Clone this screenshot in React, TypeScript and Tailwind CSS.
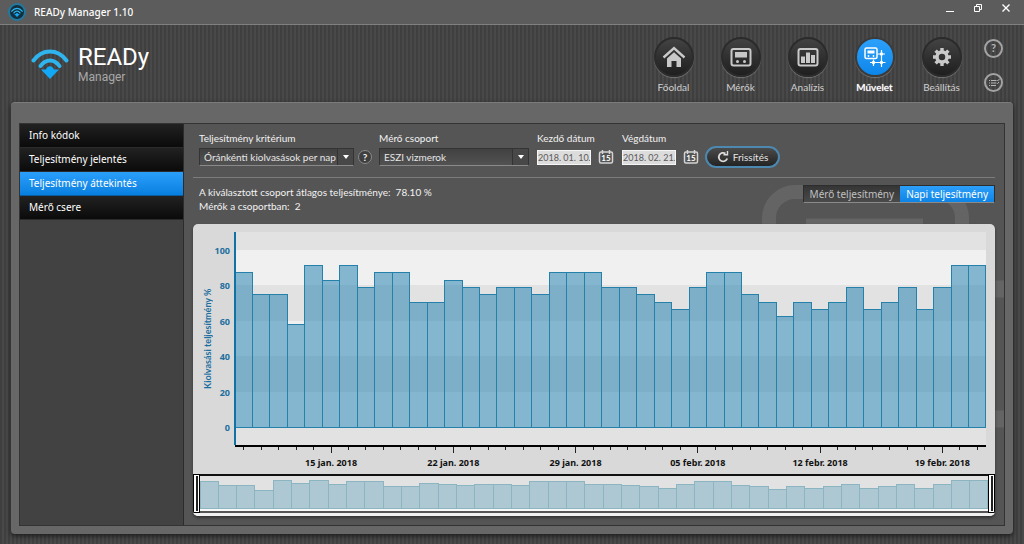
import { useState, type ReactNode } from "react";

const navItems = [
  { label: "Főoldal", icon: <HomeIcon /> },
  { label: "Mérők", icon: <MeterIcon /> },
  { label: "Analízis", icon: <AnalysisIcon /> },
  { label: "Művelet", icon: <OperationIcon /> },
  { label: "Beállítás", icon: <GearIcon /> },
];

const menuItems = [
  "Info kódok",
  "Teljesítmény jelentés",
  "Teljesítmény áttekintés",
  "Mérő csere",
];

// daily reading performance in %, one value per day
const values = [
  87.5, 75, 75, 58.3, 91.7, 83.3, 91.7, 79.2, 87.5, 87.5, 70.8, 70.8, 83.3,
  79.2, 75, 79.2, 79.2, 75, 87.5, 87.5, 87.5, 79.2, 79.2, 75, 70.8, 66.7, 79.2,
  87.5, 87.5, 75, 70.8, 62.5, 70.8, 66.7, 70.8, 79.2, 66.7, 70.8, 79.2, 66.7,
  79.2, 91.7, 91.7,
];

const dateLabels: Record<number, string> = {
  5: "15 jan. 2018",
  12: "22 jan. 2018",
  19: "29 jan. 2018",
  26: "05 febr. 2018",
  33: "12 febr. 2018",
  40: "19 febr. 2018",
};

const ZERO_Y = 195;
const UNIT = 1.77;

function pct(index: number) {
  return `${(index / values.length) * 100}%`;
}

function yPos(value: number) {
  return Math.round(ZERO_Y - value * UNIT);
}

function WifiMark({ className }: { className?: string }) {
  return (
    <svg viewBox="0 0 38 32" className={className} fill="none">
      <path
        d="M2.5 13.5C11.5 1.5 26.5 1.5 35.5 13.5"
        stroke="#2fb4ee"
        strokeWidth="4"
        strokeLinecap="round"
      />
      <path
        d="M9.5 19C14.5 11.500 23.500 11.500 28.500 19"
        stroke="#2fb4ee"
        strokeWidth="4"
        strokeLinecap="round"
      />
      <path d="M10 22.500h5c1.500-4.500 6.500-4.500 8 0h5L19 32z" fill="#12a8f5" />
    </svg>
  );
}

function HomeIcon() {
  return (
    <svg viewBox="0 0 24 24" className="h-6 w-6" fill="none">
      <path d="M1.500 12.500 12 3l10.500 9.500" stroke="#c9c9c9" strokeWidth="2.400" />
      <path d="M5 13.500 12 7.200l7 6.300V22h-4.500v-6h-5v6H5z" fill="#c9c9c9" />
    </svg>
  );
}

function MeterIcon() {
  return (
    <svg viewBox="0 0 24 24" className="h-6 w-6" fill="none">
      <rect x="2.500" y="4" width="19" height="16.500" rx="2" stroke="#c9c9c9" strokeWidth="2" />
      <rect x="6" y="7" width="12" height="5.500" fill="#c9c9c9" />
      <circle cx="8.500" cy="16.500" r="1.500" fill="#c9c9c9" />
      <circle cx="15.500" cy="16.500" r="1.500" fill="#c9c9c9" />
    </svg>
  );
}

function AnalysisIcon() {
  return (
    <svg viewBox="0 0 24 24" className="h-6 w-6" fill="none">
      <rect x="2.500" y="4" width="19" height="16.500" rx="2" stroke="#c9c9c9" strokeWidth="2" />
      <path d="M5 11.500h4V18H5zM10 7.500h4V18h-4zM15 10h4v8h-4z" fill="#c9c9c9" />
    </svg>
  );
}

function OperationIcon() {
  return (
    <svg viewBox="0 0 24 24" className="h-6 w-6" fill="none" stroke="#fff">
      <rect x="2" y="3" width="12" height="10.500" rx="1.500" strokeWidth="1.500" />
      <rect x="4.500" y="5.500" width="7" height="3" fill="#fff" stroke="none" />
      <circle cx="5.500" cy="11" r="0.900" fill="#fff" stroke="none" />
      <circle cx="10.500" cy="11" r="0.900" fill="#fff" stroke="none" />
      <path d="M18.500 5v17M7 17.500h15.500M10.500 14.500v6.500M15 9h7" strokeWidth="1.200" />
      <circle cx="18.500" cy="9" r="1.700" fill="#fff" stroke="none" />
      <circle cx="18.500" cy="17.500" r="1.700" fill="#fff" stroke="none" />
      <circle cx="10.500" cy="17.500" r="1.700" fill="#fff" stroke="none" />
    </svg>
  );
}

function GearIcon() {
  return (
    <svg viewBox="0 0 24 24" className="h-6 w-6" fill="none" stroke="#c9c9c9">
      <circle cx="12" cy="12" r="5" strokeWidth="3.500" />
      <path
        d="M12 3v4M12 17v4M3 12h4M17 12h4M5.600 5.600l2.900 2.900M15.500 15.500l2.900 2.900M5.600 18.400l2.900-2.900M15.500 8.500l2.900-2.900"
        strokeWidth="3.400"
      />
    </svg>
  );
}

function CalendarIcon() {
  return (
    <svg viewBox="0 0 16 16" className="h-4 w-4" fill="none">
      <rect x="1.500" y="3" width="13" height="11" rx="1.500" stroke="#d4d4d4" strokeWidth="1.500" />
      <path d="M4.500 1v4M11.500 1v4" stroke="#d4d4d4" strokeWidth="1.500" />
      <text
        x="8"
        y="12"
        textAnchor="middle"
        fontSize="8"
        fontWeight="700"
        fill="#fff"
      >
        15
      </text>
    </svg>
  );
}

function TitleBar() {
  return (
    <div className="flex h-[25px] items-center justify-between border-b border-[#808080] bg-[#5c5c5c] pr-[14px] pl-2">
      <div className="flex items-center gap-2">
        <span className="flex h-[18px] w-[18px] items-center justify-center rounded-full border-2 border-[#2279a0] bg-[#12303f]">
          <WifiMark className="h-3 w-3" />
        </span>
        <span className="font-['Noto_Sans',sans-serif] text-[10px] font-medium text-white">
          READy Manager 1.10
        </span>
      </div>
      <div className="flex items-center gap-5 pb-2 text-white">
        <button aria-label="Minimize">
          <svg className="h-2 w-2" viewBox="0 0 8 8">
            <path d="M0 7.500h8" stroke="currentColor" />
          </svg>
        </button>
        <button aria-label="Restore">
          <svg className="h-2 w-2" viewBox="0 0 8 8" fill="none" stroke="currentColor">
            <path d="M.5 2.500h5v5h-5zM2.500 2.500v-2h5v5h-2" />
          </svg>
        </button>
        <button aria-label="Close">
          <svg className="h-2 w-2" viewBox="0 0 8 8" stroke="currentColor" strokeWidth="1.400">
            <path d="M.5.5l7 7M7.500.5l-7 7" />
          </svg>
        </button>
      </div>
    </div>
  );
}

function NavButton({
  label,
  icon,
  active,
  onClick,
}: {
  label: string;
  icon: ReactNode;
  active: boolean;
  onClick: () => void;
}) {
  return (
    <button onClick={onClick} className="flex w-[67px] flex-col items-center gap-[2px]">
      <span
        className={
          active
            ? "flex h-10 w-10 items-center justify-center rounded-full border-2 border-[#3b3b3b] bg-linear-to-b from-[#2ba1fb] to-[#0c86ea] shadow-[0_1px_1px_#777]"
            : "flex h-10 w-10 items-center justify-center rounded-full border-2 border-[#2b2b2b] bg-linear-to-b from-[#434343] to-[#1f1f1f] shadow-[0_1px_1px_#777]"
        }
      >
        {icon}
      </span>
      <span
        className={
          active
            ? "text-[10px] leading-4 text-white [text-shadow:0_0_1px_#fff]"
            : "text-[10px] leading-4 text-[#d0d0d0]"
        }
      >
        {label}
      </span>
    </button>
  );
}

function Header() {
  const [active, setActive] = useState("Művelet");
  return (
    <header className="flex h-[77px] items-start justify-between pr-[21px] pl-[31px]">
      <div className="flex gap-[9px] pt-[18px]">
        <WifiMark className="mt-1 h-8 w-[38px]" />
        <div className="font-['Roboto',sans-serif]">
          <div className="text-[24px] leading-7 text-white">READy</div>
          <div className="text-[12px] leading-3 text-[#a8a8a8]">Manager</div>
        </div>
      </div>
      <div className="flex gap-[9px] pt-3">
        <nav className="flex">
          {navItems.map((item) => (
            <NavButton
              key={item.label}
              label={item.label}
              icon={item.icon}
              active={active === item.label}
              onClick={() => setActive(item.label)}
            />
          ))}
        </nav>
        <div className="flex flex-col gap-[15px] pt-[2px]">
          <button
            aria-label="Súgó"
            className="flex h-[19px] w-[19px] items-center justify-center rounded-full border-2 border-[#a3a3a3] text-[11px] font-bold text-[#b5b5b5]"
          >
            ?
          </button>
          <button
            aria-label="Napló"
            className="flex h-[19px] w-[19px] items-center justify-center rounded-full border-2 border-[#a3a3a3]"
          >
            <svg viewBox="0 0 12 12" className="h-3 w-3" stroke="#b5b5b5" fill="none">
              <path d="M1 3.500h1M3 3.500h5M1 6h1M3 6h5M1 8.500h1M3 8.500h5M8.500 3l1 1 2-2M8.500 6l1 .5 1.500-1.500" />
            </svg>
          </button>
        </div>
      </div>
    </header>
  );
}

function Sidebar() {
  const [active, setActive] = useState("Teljesítmény áttekintés");
  return (
    <aside className="w-[164px] shrink-0 border-r border-[#2c2c2c] bg-[#424242] font-['Noto_Sans',sans-serif] text-[10px] text-white">
      {menuItems.map((item) => (
        <button
          key={item}
          onClick={() => setActive(item)}
          className={
            active === item
              ? "block h-6 w-full border-b border-[#0b5c9c] bg-linear-to-b from-[#2a9ffa] to-[#067fe0] px-[9px] text-left"
              : "block h-6 w-full border-b border-[#2b2b2b] bg-linear-to-b from-[#222] to-[#0b0b0b] px-[9px] text-left"
          }
        >
          {item}
        </button>
      ))}
    </aside>
  );
}

function SelectField({
  id,
  label,
  option,
  className,
}: {
  id: string;
  label: string;
  option: string;
  className: string;
}) {
  return (
    <div className={className}>
      <label htmlFor={id} className="block leading-4">
        {label}
      </label>
      <div className="relative mt-[2px]">
        <select
          id={id}
          className="block h-[18px] w-full appearance-none border border-[#343434] border-b-[#8a8a8a] bg-linear-to-b from-[#414141] to-[#525252] pr-4 pl-1 text-[#e6e6e6]"
        >
          <option>{option}</option>
        </select>
        <span className="pointer-events-none absolute inset-y-px right-px flex w-4 items-center justify-center border-l border-[#333] bg-[#484848]">
          <svg viewBox="0 0 6 4" className="h-1 w-[6px]" fill="#fff">
            <path d="M0 0h6L3 4z" />
          </svg>
        </span>
      </div>
    </div>
  );
}

function DateField({ id, label, value }: { id: string; label: string; value: string }) {
  return (
    <div className="w-[77px]">
      <label htmlFor={id} className="block leading-4">
        {label}
      </label>
      <div className="mt-[2px] flex h-[18px] items-center gap-[7px]">
        <input
          id={id}
          defaultValue={value}
          className="h-[15px] w-[54px] min-w-0 border border-[#f5f5f5] bg-[#dcdcdc] text-[9px] text-[#5a5a5a]"
        />
        <button aria-label={`${label} választása`}>
          <CalendarIcon />
        </button>
      </div>
    </div>
  );
}

function FilterBar() {
  return (
    <div className="flex border-b border-[#7c7c7c] px-[6px] pt-[6px] pb-[11px] text-[10px] text-[#f2f2f2]">
      <SelectField
        id="criterion"
        label="Teljesítmény kritérium"
        option="Óránkénti kiolvasások per nap"
        className="w-[155px]"
      />
      <button
        aria-label="Kritérium súgó"
        className="mt-[20px] ml-1 flex h-[14px] w-[14px] items-center justify-center rounded-full border border-[#8a8a8a] bg-[#3f3f3f] text-[10px] font-bold"
      >
        ?
      </button>
      <SelectField
        id="group"
        label="Mérő csoport"
        option="ESZI vizmerok"
        className="ml-[7px] w-[150px]"
      />
      <div className="ml-2 flex gap-2">
        <DateField id="start" label="Kezdő dátum" value="2018. 01. 10." />
        <DateField id="end" label="Végdátum" value="2018. 02. 21." />
      </div>
      <button className="mt-4 -mb-1 ml-[6px] flex h-[22px] w-[75px] items-center justify-center gap-1 rounded-full border-2 border-[#4c88b0] bg-linear-to-b from-[#4b4b4b] to-[#242424] text-[#e6e6e6]">
        <svg viewBox="0 0 12 12" className="h-3 w-3" fill="none" stroke="#dcdcdc" strokeWidth="1.800">
          <path d="M8.500 2.500A4.300 4.300 0 1 0 10.200 7.500" />
          <path d="M6.500 3.700h4V0" strokeWidth="1.400" />
        </svg>
        Frissítés
      </button>
    </div>
  );
}

function Summary() {
  const [tab, setTab] = useState("daily");
  const on =
    "h-4 bg-linear-to-b from-[#2b9ff9] to-[#0c84e6] px-[6px] leading-4 text-white";
  const off =
    "h-4 bg-linear-to-b from-[#353535] to-[#4a4a4a] px-[6px] leading-4 text-[#c0c0c0]";
  return (
    <div className="flex h-[46px] items-start justify-between pt-[7px] pl-[6px] text-[10px]">
      <div className="leading-[14px] text-[#f2f2f2]">
        <p>A kiválasztott csoport átlagos teljesítménye:&nbsp; 78.10 %</p>
        <p>Mérők a csoportban:&nbsp; 2</p>
      </div>
      <div className="flex border border-[#2d2d2d] border-b-[#8a8a8a] font-['Noto_Sans',sans-serif]">
        <button className={tab === "meter" ? on : off} onClick={() => setTab("meter")}>
          Mérő teljesítmény
        </button>
        <button className={tab === "daily" ? on : off} onClick={() => setTab("daily")}>
          Napi teljesítmény
        </button>
      </div>
    </div>
  );
}

function Bars({ y, base, fill, stroke }: {
  y: (value: number) => number;
  base: number;
  fill: string;
  stroke: string;
}) {
  return (
    <g shapeRendering="crispEdges">
      {values.map((value, i) => (
        <rect
          key={i}
          x={pct(i)}
          y={y(value)}
          width={pct(1)}
          height={base - y(value)}
          fill={fill}
          stroke={stroke}
        />
      ))}
    </g>
  );
}

function MainChart() {
  return (
    <div className="flex pt-2 pr-[9px]">
      <div className="flex w-[21px] shrink-0 justify-end pb-[28px]">
        <span className="rotate-180 text-center text-[9px] leading-[12px] font-bold text-[#1d6fa0] [writing-mode:vertical-rl]">
          Kiolvasási teljesítmény %
        </span>
      </div>
      <svg className="h-[242px] w-[21px] shrink-0 font-['Noto_Sans',sans-serif]">
        {[100, 80, 60, 40, 20, 0].map((tick) => (
          <text
            key={tick}
            x="16"
            y={yPos(tick) + 4}
            textAnchor="end"
            className="fill-[#1d6fa0] text-[9px] font-bold"
          >
            {tick}
          </text>
        ))}
      </svg>
      <svg className="h-[242px] min-w-0 flex-1 overflow-visible font-['Noto_Sans',sans-serif]">
        <rect width="100%" height="213" fill="#e2e2e2" />
        {[100, 60, 20].map((top) => (
          <rect
            key={top}
            y={yPos(top)}
            width="100%"
            height={yPos(top - 20) - yPos(top)}
            fill="#f0f0f0"
          />
        ))}
        <Bars y={yPos} base={ZERO_Y} fill="rgb(32 128 176 / 0.52)" stroke="#2580aa" />
        <rect x="-1" width="2" height="213" fill="#1173a3" />
        <rect y="213" width="100%" height="2" fill="#000" />
        {values.map((_, i) => (
          <line
            key={i}
            x1={pct(i + 0.5)}
            x2={pct(i + 0.5)}
            y1="215"
            y2={dateLabels[i] ? 221 : 218}
            stroke="#222"
            shapeRendering="crispEdges"
          />
        ))}
        {Object.entries(dateLabels).map(([i, label]) => (
          <text
            key={i}
            x={pct(Number(i) + 0.5)}
            y="234"
            textAnchor="middle"
            className="fill-[#111] text-[9px] font-bold"
          >
            {label}
          </text>
        ))}
      </svg>
    </div>
  );
}

function RangeHandle() {
  return (
    <span className="flex h-full w-[7px] shrink-0 justify-center border border-black bg-white py-px">
      <span className="w-[2px] bg-[#222]" />
    </span>
  );
}

function Overview() {
  return (
    <div className="flex h-[39px]">
      <RangeHandle />
      <div className="min-w-0 flex-1 border-t-2 border-b-2 border-t-[#111] border-b-[#555] bg-[#f7f7f7]">
        <svg className="h-[33px] w-full bg-[#e2e2e2]">
          <Bars
            y={(value) => Math.round(32 - value * 0.305)}
            base={32}
            fill="#adc8d2"
            stroke="#8ab5c1"
          />
        </svg>
      </div>
      <RangeHandle />
    </div>
  );
}

function Watermark() {
  return (
    <svg className="absolute top-[60px] right-0 h-[300px] w-[242px]" fill="none" stroke="#646464">
      <rect x="7" y="8" width="193" height="220" rx="26" strokeWidth="14" />
      <path d="M44 43h117M190 105h52M190 235h52" strokeWidth="17" />
    </svg>
  );
}

export default function App() {
  return (
    <div className="flex min-h-screen flex-col bg-[#424242] bg-[repeating-linear-gradient(90deg,#3f3f3f_0_2px,#494949_2px_4px)] font-['Lato','Noto_Sans',sans-serif]">
      <TitleBar />
      <Header />
      <main className="mx-[11px] mb-[10px] flex flex-1 rounded-[4px] border-t border-[#7c7c7c] bg-[#676767] px-2 pt-5 pb-2 shadow-[0_2px_5px_#1c1c1c]">
        <div className="flex min-w-0 flex-1 border border-[#333] bg-[#555]">
          <Sidebar />
          <section className="relative min-w-0 flex-1 px-[9px]">
            <Watermark />
            <div className="relative">
              <FilterBar />
              <Summary />
              <div className="overflow-hidden rounded-[5px] bg-[#d9d9d9] shadow-[0_2px_3px_#333]">
                <MainChart />
                <Overview />
                <div className="h-[3px] bg-[#f0f0f0]" />
              </div>
            </div>
          </section>
        </div>
      </main>
    </div>
  );
}
